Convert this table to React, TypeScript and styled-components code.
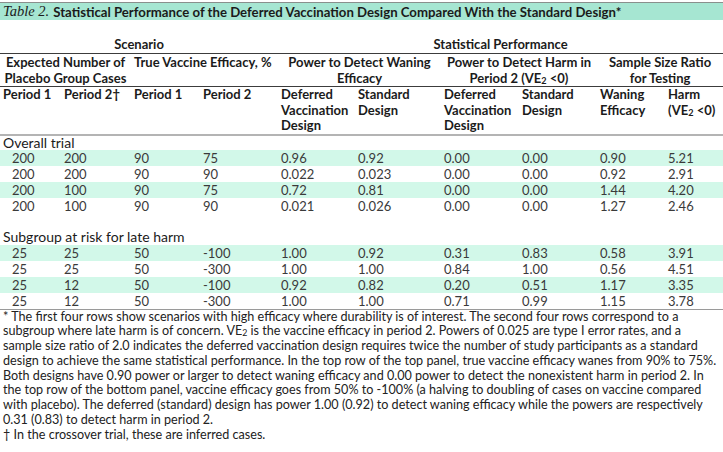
import React from "react";
import styled, { createGlobalStyle } from "styled-components";

const Global = createGlobalStyle`
  html, body { margin: 0; padding: 0; background: #ffffff; }
  body { font-family: Lato, "Noto Sans", sans-serif; color: #1b1b1b; }
`;

const Page = styled.div`
  width: 723px;
  padding-top: 2px;
`;

const TitleBar = styled.div`
  height: 17px;
  border-top: 1px solid #8a8f8d;
  background: #a6e6d2;
  display: flex;
  align-items: center;
  padding-left: 3px;
  font-size: 13.2px;
  white-space: nowrap;
`;

const TitleLabel = styled.span`
  font-family: "Liberation Serif", serif;
  font-style: italic;
  font-size: 14.5px;
  margin-right: 4px;
`;

const TitleText = styled.span`
  font-weight: 700;
`;

const Table = styled.table`
  margin-top: 16px;
  width: 723px;
  border-collapse: collapse;
  table-layout: fixed;
  font-size: 13px;
`;

const HeadCell = styled.th<{ $line?: "dark" | "light"; $align?: "center" | "left" }>`
  font-weight: 700;
  text-align: ${(p) => p.$align ?? "center"};
  vertical-align: top;
  padding: 0 3px;
  line-height: 16px;
  color: #1b1b1b;
  border-bottom: ${(p) =>
    p.$line === "dark" ? "1.5px solid #3c3c3c" : p.$line === "light" ? "2px solid #b4b4b4" : "none"};
`;

const TopHead = styled(HeadCell)`
  padding-bottom: 1px;
`;

const ColHead = styled(HeadCell)`
  line-height: 15.5px;
  text-align: left;
`;

const Row = styled.tr<{ $striped?: boolean }>`
  background: ${(p) => (p.$striped ? "#d2f8e9" : "transparent")};
`;

const Cell = styled.td<{ $indent?: boolean }>`
  padding: 0 3px 0 ${(p) => (p.$indent ? "12px" : "3px")};
  height: 16px;
  line-height: 16px;
  color: #3a3a3a;
  font-weight: 400;
  white-space: nowrap;
`;

const GroupCell = styled.td<{ $tall?: boolean }>`
  padding: 0 3px;
  height: ${(p) => (p.$tall ? "16px" : "14px")};
  line-height: ${(p) => (p.$tall ? "16px" : "14px")};
  font-size: 14px;
  color: #1b1b1b;
  white-space: nowrap;
`;

const SpacerCell = styled.td`
  height: 15px;
  padding: 0;
`;

const EndRow = styled.tr`
  border-bottom: 1.5px solid #9a9a9a;
`;

const Notes = styled.div`
  padding: 0 0 0 3px;
  font-size: 12.6px;
  line-height: 14.75px;
  color: #222;
`;

const NoteLine = styled.div`
  white-space: nowrap;
`;

const Sub = styled.span`
  font-size: 0.7em;
  line-height: 0;
  vertical-align: -0.15em;
`;

const widths = [61, 70, 69, 78, 77, 86, 78, 78, 68, 58];

type R = string[];

const overall: R[] = [
  ["200", "200", "90", "75", "0.96", "0.92", "0.00", "0.00", "0.90", "5.21"],
  ["200", "200", "90", "90", "0.022", "0.023", "0.00", "0.00", "0.92", "2.91"],
  ["200", "100", "90", "75", "0.72", "0.81", "0.00", "0.00", "1.44", "4.20"],
  ["200", "100", "90", "90", "0.021", "0.026", "0.00", "0.00", "1.27", "2.46"],
];

const subgroup: R[] = [
  ["25", "25", "50", "-100", "1.00", "0.92", "0.31", "0.83", "0.58", "3.91"],
  ["25", "25", "50", "-300", "1.00", "1.00", "0.84", "1.00", "0.56", "4.51"],
  ["25", "12", "50", "-100", "0.92", "0.82", "0.20", "0.51", "1.17", "3.35"],
  ["25", "12", "50", "-300", "1.00", "1.00", "0.71", "0.99", "1.15", "3.78"],
];

function DataRows({ rows, last }: { rows: R[]; last?: boolean }) {
  return (
    <>
      {rows.map((r, i) => {
        const cells = r.map((v, j) => (
          <Cell key={j} $indent={j === 0}>
            {v}
          </Cell>
        ));
        if (last && i === rows.length - 1) {
          return <EndRow key={i}>{cells}</EndRow>;
        }
        return (
          <Row key={i} $striped={i % 2 === 0}>
            {cells}
          </Row>
        );
      })}
    </>
  );
}

export default function App() {
  return (
    <Page>
      <Global />
      <TitleBar>
        <TitleLabel>Table 2.</TitleLabel>
        <TitleText>
          Statistical Performance of the Deferred Vaccination Design Compared With the Standard Design*
        </TitleText>
      </TitleBar>
      <Table>
        <colgroup>
          {widths.map((w, i) => (
            <col key={i} style={{ width: w }} />
          ))}
        </colgroup>
        <thead>
          <tr>
            <TopHead colSpan={4} $line="dark">
              Scenario
            </TopHead>
            <TopHead colSpan={6} $line="dark">
              Statistical Performance
            </TopHead>
          </tr>
          <tr>
            <HeadCell colSpan={2} $line="dark">
              Expected Number of Placebo Group Cases
            </HeadCell>
            <HeadCell colSpan={2} $line="dark" $align="left">
              True Vaccine Efficacy, %
            </HeadCell>
            <HeadCell colSpan={2} $line="dark">
              Power to Detect Waning Efficacy
            </HeadCell>
            <HeadCell colSpan={2} $line="dark">
              Power to Detect Harm in Period 2 (VE<Sub>2</Sub> &lt;0)
            </HeadCell>
            <HeadCell colSpan={2} $line="dark">
              Sample Size Ratio for Testing
            </HeadCell>
          </tr>
          <tr>
            <ColHead $line="light">Period 1</ColHead>
            <ColHead $line="light">Period 2†</ColHead>
            <ColHead $line="light">Period 1</ColHead>
            <ColHead $line="light">Period 2</ColHead>
            <ColHead $line="light">Deferred Vaccination Design</ColHead>
            <ColHead $line="light">Standard Design</ColHead>
            <ColHead $line="light">Deferred Vaccination Design</ColHead>
            <ColHead $line="light">Standard Design</ColHead>
            <ColHead $line="light">Waning Efficacy</ColHead>
            <ColHead $line="light">
              Harm (VE<Sub>2</Sub> &lt;0)
            </ColHead>
          </tr>
        </thead>
        <tbody>
          <tr>
            <GroupCell colSpan={10}>Overall trial</GroupCell>
          </tr>
          <DataRows rows={overall} />
          <tr>
            <SpacerCell colSpan={10} />
          </tr>
          <tr>
            <GroupCell colSpan={10} $tall>
              Subgroup at risk for late harm
            </GroupCell>
          </tr>
          <DataRows rows={subgroup} last />
        </tbody>
      </Table>
      <Notes>
        <NoteLine>
          * The first four rows show scenarios with high efficacy where durability is of interest. The second four rows
          correspond to a
        </NoteLine>
        <NoteLine>
          subgroup where late harm is of concern. VE<Sub>2</Sub> is the vaccine efficacy in period 2. Powers of 0.025
          are type I error rates, and a
        </NoteLine>
        <NoteLine>
          sample size ratio of 2.0 indicates the deferred vaccination design requires twice the number of study
          participants as a standard
        </NoteLine>
        <NoteLine>
          design to achieve the same statistical performance. In the top row of the top panel, true vaccine efficacy
          wanes from 90% to 75%.
        </NoteLine>
        <NoteLine>
          Both designs have 0.90 power or larger to detect waning efficacy and 0.00 power to detect the nonexistent
          harm in period 2. In
        </NoteLine>
        <NoteLine>
          the top row of the bottom panel, vaccine efficacy goes from 50% to -100% (a halving to doubling of cases on
          vaccine compared
        </NoteLine>
        <NoteLine>
          with placebo). The deferred (standard) design has power 1.00 (0.92) to detect waning efficacy while the
          powers are respectively
        </NoteLine>
        <NoteLine>0.31 (0.83) to detect harm in period 2.</NoteLine>
        <NoteLine>† In the crossover trial, these are inferred cases.</NoteLine>
      </Notes>
    </Page>
  );
}
